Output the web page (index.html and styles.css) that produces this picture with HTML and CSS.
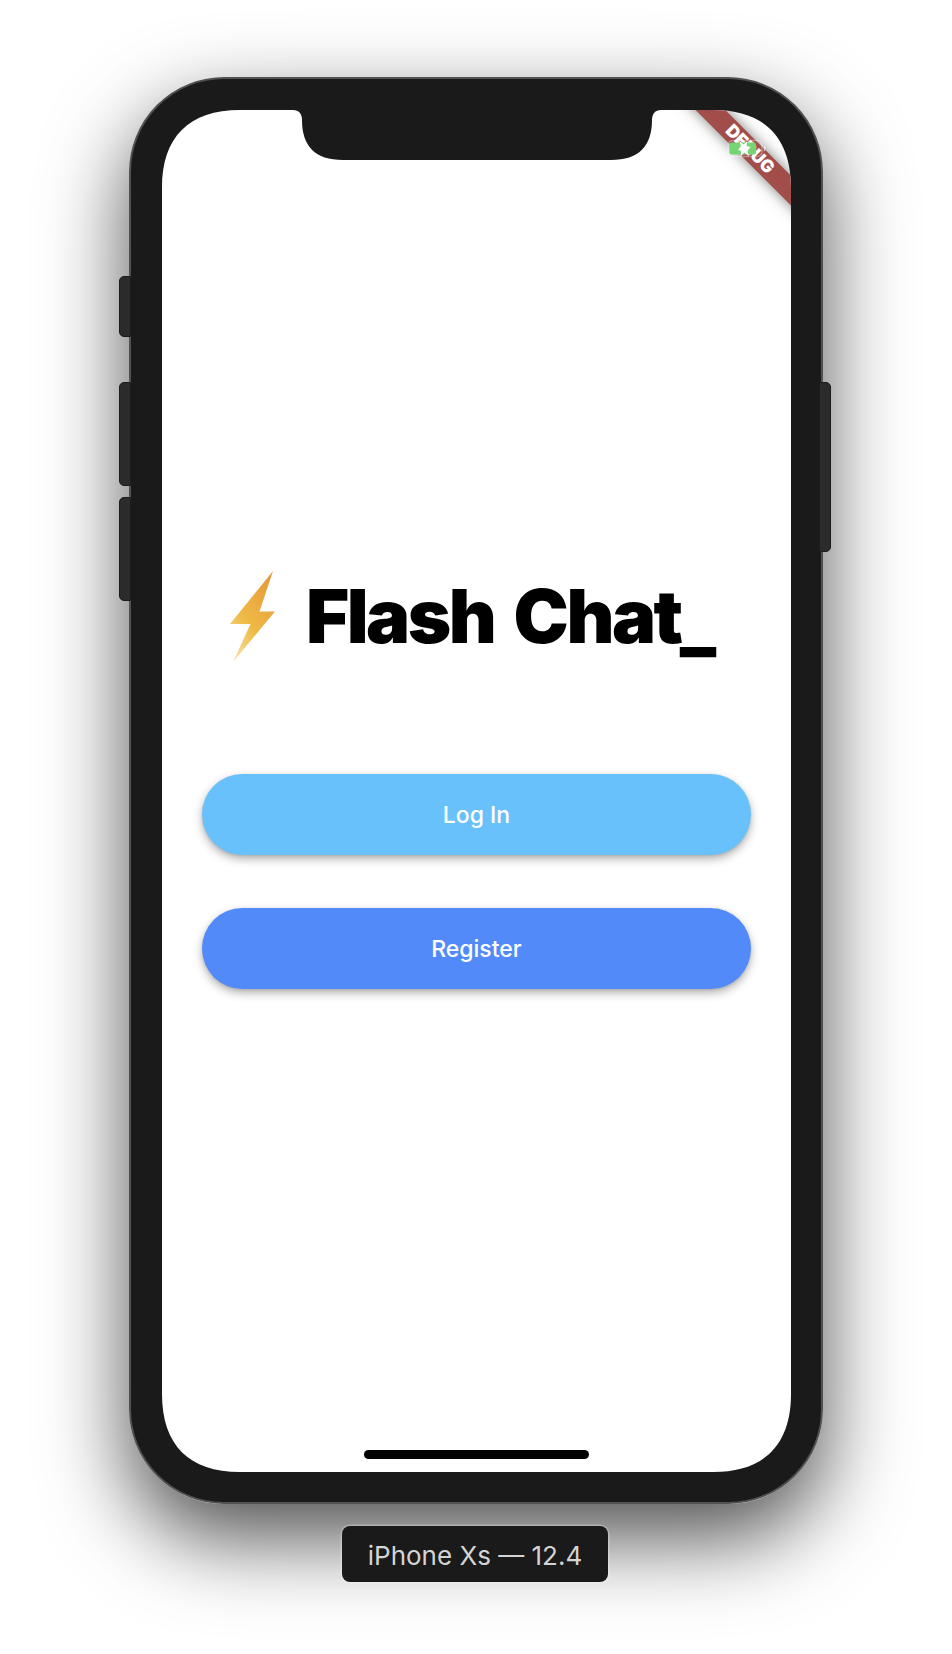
FILE: index.html
```html
<!DOCTYPE html>
<html lang="en">
<head>
<meta charset="utf-8">
<title>Flash Chat</title>
<link rel="stylesheet" href="styles.css">
</head>
<body>
<main class="stage">
  <div class="phone">
    <span class="key key-mute"></span>
    <span class="key key-up"></span>
    <span class="key key-down"></span>
    <span class="key key-power"></span>
    <div class="bezel">
      <div class="screen">
        <div class="ribbon">DEBUG</div>
        <svg class="battery" width="42" height="24" viewBox="0 0 42 24">
          <rect x="1" y="3.500" width="34" height="16" rx="5" fill="none" stroke="#fff" stroke-opacity=".35" stroke-width="1.4"/>
          <path d="M36.8 8.5c2.4 1 2.4 5 0 6z" fill="#fff" fill-opacity=".6"/>
          <rect x="2.500" y="5.500" width="26.500" height="12" rx="2" fill="#74d572"/>
          <path d="M12 3.500l4.500 4 4-3.500-1 5 4 1-3 4 1.500 5.500-4.500-4-4 4 .5-5.500-3-1 3-4z" fill="#fff"/>
        </svg>
        <div class="brand">
          <svg class="bolt" width="46" height="91" viewBox="0 0 46 91">
            <defs>
              <linearGradient id="gold" x1=".8" y1="0" x2=".2" y2="1">
                <stop offset="0" stop-color="#e59a3c"/>
                <stop offset=".6" stop-color="#efba45"/>
                <stop offset="1" stop-color="#f7dfa0"/>
              </linearGradient>
            </defs>
            <path d="M43 0 29.500 40.500H45L3 91 20.500 53H0z" fill="url(#gold)"/>
          </svg>
          <h1 class="title">Flash Chat<span class="cursor">_</span></h1>
        </div>
        <button class="btn btn-login">Log In</button>
        <button class="btn btn-register">Register</button>
        <div class="home"></div>
      </div>
    </div>
  </div>
  <div class="device-name">iPhone Xs — 12.4</div>
</main>
</body>
</html>
```
FILE: styles.css
```css
* { box-sizing: border-box; }
body { margin: 0; background: #fff; font-family: Inter, "Liberation Sans", sans-serif; }
.stage {
  width: 952px;
  height: 1654px;
  padding-top: 77px;
  display: flex;
  flex-direction: column;
  align-items: center;
  overflow: hidden;
}
.phone {
  position: relative;
  width: 694px;
  height: 1427px;
  border-radius: 95px;
  box-shadow: 0 34px 84px rgba(0, 0, 0, .69);
}
.bezel {
  position: relative;
  height: 100%;
  padding: 31px 30px 30px 31px;
  border: 2px solid #505252;
  border-radius: 95px;
  background: #1a1a1a;
}
.key {
  position: absolute;
  z-index: 1;
  left: -10px;
  width: 12px;
  background: #2b2b2b;
  border: 1px solid #1c1c1c;
  border-radius: 5px 1px 1px 5px;
}
.key-mute { top: 199px; height: 61px; }
.key-up { top: 305px; height: 104px; }
.key-down { top: 420px; height: 104px; }
.key-power { left: auto; right: -8px; top: 305px; height: 170px; border-radius: 1px 5px 5px 1px; }
.screen {
  position: relative;
  width: 629px;
  height: 1362px;
  padding: 461px 40px 0;
  background: #fff;
  clip-path: path("M0 78C0 27 27 0 78 0H131C137 0 140 4 140 10C140 36 153 50 181 50H449C477 50 490 36 490 10C490 4 493 0 499 0H551C602 0 629 27 629 78V1284C629 1335 602 1362 551 1362H78C27 1362 0 1335 0 1284Z");
}
.ribbon {
  position: absolute;
  left: 488px;
  top: 29px;
  width: 200px;
  height: 20.500px;
  transform: rotate(45deg);
  background: #a14e4b;
  box-shadow: 0 0 14px rgba(0, 0, 0, .5);
  color: #fff;
  font-size: 17.500px;
  font-weight: 900;
  line-height: 20.500px;
  text-align: center;
}
.battery { position: absolute; left: 565px; top: 27px; }
.brand { display: flex; height: 91px; padding-left: 28px; }
.bolt { flex: none; }
.title {
  margin: 0 0 0 30px;
  font-size: 74px;
  line-height: 91px;
  font-weight: 900;
  letter-spacing: -2.500px;
  word-spacing: 7px;
  white-space: nowrap;
  color: #000;
}
.cursor { position: relative; top: 4px; margin-left: -1px; }
.btn {
  display: block;
  width: 549px;
  height: 81px;
  padding: 0;
  border: 0;
  border-radius: 41px;
  color: #fff;
  font: 500 23px/80px Inter, sans-serif;
  box-shadow: 0 4px 10px rgba(0, 0, 0, .3), 0 1px 3px rgba(0, 0, 0, .1);
}
.btn-login { margin-top: 112px; background: #68c1fa; }
.btn-register { margin-top: 53px; background: #528bf9; }
.home {
  width: 225px;
  height: 9px;
  margin: 461px auto 0;
  border-radius: 5px;
  background: #000;
}
.device-name {
  position: relative;
  width: 266px;
  height: 56px;
  margin: 22px 2px 0 0;
  border-radius: 8px;
  background: #1a1a1a;
  box-shadow: 0 0 0 1.500px rgba(255, 255, 255, .28);
  color: #d4d4d4;
  font-size: 26px;
  line-height: 59px;
  text-align: center;
}
```
